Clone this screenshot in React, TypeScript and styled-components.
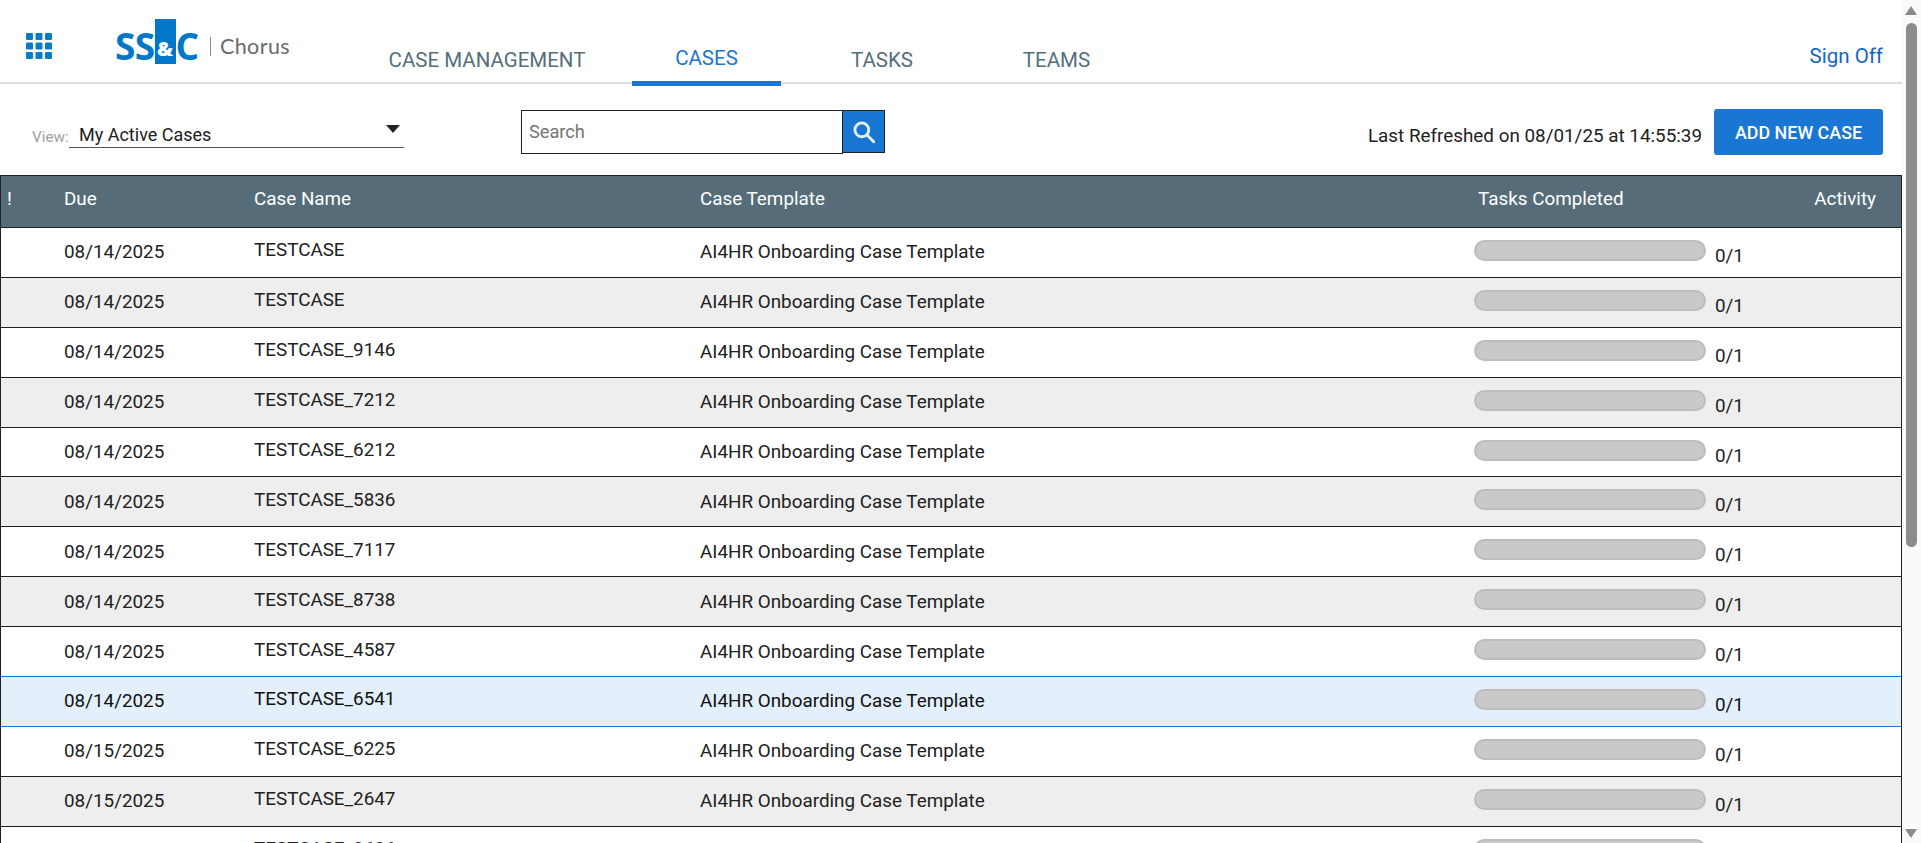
import React from "react";
import styled, { createGlobalStyle } from "styled-components";

const Global = createGlobalStyle`
  html, body { margin: 0; padding: 0; height: 100%; overflow: hidden; background: #fff; }
  #root { height: 100%; }
  * { box-sizing: border-box; }
  body { font-family: Roboto, "Liberation Sans", Arial, sans-serif; color: #212121; }
`;

const Page = styled.div`
  display: flex;
  height: 843px;
  overflow: hidden;
`;

const Main = styled.div`
  flex: 0 0 1902px;
  width: 1902px;
  display: flex;
  flex-direction: column;
  overflow: hidden;
`;

const Rail = styled.div`
  flex: 0 0 19px;
  background: #fafafa;
  display: flex;
  flex-direction: column;
  align-items: center;
  padding: 6px 2px 5px 2px;
`;

const ArrowUp = styled.div`
  width: 0;
  height: 0;
  border-left: 6.5px solid transparent;
  border-right: 6.5px solid transparent;
  border-bottom: 9px solid #8a8a8a;
  margin-left: -1px;
`;

const ArrowDown = styled.div`
  width: 0;
  height: 0;
  border-left: 6.5px solid transparent;
  border-right: 6.5px solid transparent;
  border-top: 9px solid #8a8a8a;
  margin-top: auto;
  margin-left: -1px;
`;

const Thumb = styled.div`
  width: 11px;
  height: 524px;
  margin-top: 8px;
  margin-left: -1px;
  background: #8c8c8c;
  border-radius: 6px;
`;

const Header = styled.header`
  height: 84px;
  flex: none;
  display: flex;
  border-bottom: 2px solid #dedede;
  position: relative;
`;

const Apps = styled.svg`
  width: 26px;
  height: 26px;
  margin: 33px 0 0 26px;
  flex: none;
`;

const Logo = styled.div`
  margin: 19px 0 0 63px;
  width: 227px;
  height: 45px;
  flex: none;
  display: flex;
  align-items: center;
`;

const LogoLetters = styled.span`
  font-family: "Open Sans", "Liberation Sans", sans-serif;
  font-weight: 700;
  font-size: 37px;
  line-height: 36px;
  letter-spacing: -0.6px;
  color: #0077c8;
  margin-top: 9px;
  flex: none;
`;

const LogoC = styled(LogoLetters)`
  letter-spacing: 0;
`;

const LogoBox = styled.span`
  width: 21px;
  height: 45px;
  background: #0077c8;
  color: #fff;
  display: flex;
  align-items: center;
  justify-content: center;
  font-family: "Open Sans", "Liberation Sans", sans-serif;
  font-weight: 800;
  font-size: 20px;
  padding-top: 14px;
  flex: none;
`;

const LogoDivider = styled.span`
  width: 1px;
  height: 19px;
  background: #8a8a8a;
  margin: 9px 9px 0 auto;
  flex: none;
`;

const LogoWord = styled.span`
  font-family: Lato, "Open Sans", sans-serif;
  font-weight: 400;
  font-size: 21.5px;
  letter-spacing: 0.4px;
  color: #6a6a6a;
  margin: 9px 0 0 0;
  flex: none;
`;

const LogoInner = styled.div`
  width: 175px;
  display: flex;
  align-items: center;
  height: 45px;
`;

const Tabs = styled.nav`
  display: flex;
  height: 86px;
`;

const Tab = styled.a<{ $active?: boolean; $w: number }>`
  width: ${(p) => p.$w}px;
  flex: none;
  height: 86px;
  display: flex;
  justify-content: center;
  font-size: 20.5px;
  padding-top: ${(p) => (p.$active ? 46 : 48)}px;
  line-height: 24px;
  color: ${(p) => (p.$active ? "#1976d2" : "#546e7a")};
  border-bottom: 5px solid ${(p) => (p.$active ? "#1976d2" : "transparent")};
`;

const SignOff = styled.a`
  margin: 44px 19px 0 auto;
  font-size: 20.5px;
  line-height: 24px;
  color: #1565c0;
`;

const Toolbar = styled.div`
  height: 91px;
  flex: none;
  display: flex;
  align-items: flex-start;
`;

const ViewLabel = styled.label`
  margin: 44px 0 0 32px;
  font-size: 15.3px;
  line-height: 18px;
  color: #9e9e9e;
  width: 37px;
  flex: none;
`;

const ViewSelect = styled.div`
  width: 335px;
  height: 33px;
  margin-top: 31px;
  padding: 7px 0 0 10px;
  border-bottom: 1px solid #555;
  font-size: 18px;
  line-height: 26px;
  color: #212121;
  position: relative;
  flex: none;
`;

const Caret = styled.span`
  position: absolute;
  right: 4px;
  top: 10px;
  width: 0;
  height: 0;
  border-left: 7px solid transparent;
  border-right: 7px solid transparent;
  border-top: 8px solid #212121;
`;

const Search = styled.div`
  display: flex;
  align-items: flex-start;
  margin: 26px 0 0 117px;
  flex: none;
`;

const SearchInput = styled.div`
  width: 322px;
  height: 44px;
  border: 1px solid #212121;
  padding-left: 7px;
  font-size: 18.2px;
  line-height: 42px;
  color: #757575;
`;

const SearchButton = styled.button`
  width: 42px;
  height: 43px;
  padding: 0;
  background: #1976d2;
  border: 1px solid #212121;
  border-left: none;
  display: flex;
  align-items: center;
  justify-content: center;
`;

const Refreshed = styled.div`
  margin: 40px 12px 0 auto;
  font-size: 18.85px;
  line-height: 24px;
  color: #212121;
`;

const AddButton = styled.button`
  width: 169px;
  height: 46px;
  margin: 25px 19px 0 0;
  background: #1976d2;
  color: #fff;
  border: none;
  border-radius: 3px;
  font-family: inherit;
  font-size: 17.9px;
  font-weight: 500;
  flex: none;
`;

const Grid = styled.div`
  border-left: 1px solid #212121;
  border-right: 1px solid #212121;
  flex: none;
`;

const columns = "63px 190px 446px 774px 1fr";

const HeadRow = styled.div`
  display: grid;
  grid-template-columns: ${columns};
  height: 53px;
  padding-bottom: 5px;
  align-items: center;
  background: #566d79;
  color: #fff;
  border-top: 1px solid #212121;
  border-bottom: 1px solid #212121;
  font-size: 18.85px;
  font-weight: 400;
`;

const Bang = styled.span`
  padding-left: 6px;
`;

const HeadTail = styled.div`
  display: flex;
  justify-content: space-between;
  padding: 0 25px 0 4px;
`;

const Row = styled.div<{ $even: boolean; $selected: boolean }>`
  display: grid;
  grid-template-columns: ${columns};
  height: 49.9px;
  align-items: center;
  font-size: 18.85px;
  color: ${(p) => (p.$selected ? "#111" : "#212121")};
  background: ${(p) => (p.$selected ? "#e3f0fb" : p.$even ? "#eeeeee" : "#ffffff")};
  border-bottom: 1px solid ${(p) => (p.$selected ? "#1976d2" : "#212121")};
  box-shadow: ${(p) => (p.$selected ? "0 -1px 0 #1976d2" : "none")};
`;

const DueCell = styled.span`
  grid-column: 2;
`;

const NameCell = styled.span`
  padding-bottom: 4px;
`;

const TemplateCell = styled.span``;

const TasksCell = styled.div`
  display: flex;
  align-items: flex-start;
  align-self: start;
  padding-top: 12px;
`;

const Track = styled.div`
  width: 232px;
  height: 21px;
  background: #c9c9c9;
  border: 2px solid #bdbdbd;
  border-radius: 11px;
  flex: none;
`;

const Count = styled.span`
  margin: 4px 0 0 9px;
  line-height: 24px;
`;

const rows: [string, string][] = [
  ["08/14/2025", "TESTCASE"],
  ["08/14/2025", "TESTCASE"],
  ["08/14/2025", "TESTCASE_9146"],
  ["08/14/2025", "TESTCASE_7212"],
  ["08/14/2025", "TESTCASE_6212"],
  ["08/14/2025", "TESTCASE_5836"],
  ["08/14/2025", "TESTCASE_7117"],
  ["08/14/2025", "TESTCASE_8738"],
  ["08/14/2025", "TESTCASE_4587"],
  ["08/14/2025", "TESTCASE_6541"],
  ["08/15/2025", "TESTCASE_6225"],
  ["08/15/2025", "TESTCASE_2647"],
  ["08/15/2025", "TESTCASE_8686"],
];

const dots = [0, 9.5, 19];

export default function App() {
  return (
    <Page>
      <Global />
      <Main>
        <Header>
          <Apps viewBox="0 0 26 26">
            {dots.flatMap((y) =>
              dots.map((x) => <rect key={`${x}-${y}`} x={x} y={y} width="7" height="7" rx="1.2" fill="#0a7cc4" />)
            )}
          </Apps>
          <Logo>
            <LogoInner>
              <LogoLetters>SS</LogoLetters>
              <LogoBox>&amp;</LogoBox>
              <LogoC>C</LogoC>
              <LogoDivider />
              <LogoWord>Chorus</LogoWord>
            </LogoInner>
          </Logo>
          <Tabs>
            <Tab $w={290}>CASE MANAGEMENT</Tab>
            <Tab $w={149} $active>CASES</Tab>
            <Tab $w={202}>TASKS</Tab>
            <Tab $w={147}>TEAMS</Tab>
          </Tabs>
          <SignOff>Sign Off</SignOff>
        </Header>
        <Toolbar>
          <ViewLabel>View:</ViewLabel>
          <ViewSelect>
            My Active Cases
            <Caret />
          </ViewSelect>
          <Search>
            <SearchInput>Search</SearchInput>
            <SearchButton aria-label="Search">
              <svg width="26" height="26" viewBox="0 0 24 24" fill="none" stroke="#e3f0fb" strokeWidth="2.6" strokeLinecap="round">
                <circle cx="10" cy="10" r="6.4" />
                <path d="M15 15l6 6" />
              </svg>
            </SearchButton>
          </Search>
          <Refreshed>Last Refreshed on 08/01/25 at 14:55:39</Refreshed>
          <AddButton>ADD NEW CASE</AddButton>
        </Toolbar>
        <Grid>
          <HeadRow>
            <Bang>!</Bang>
            <span>Due</span>
            <span>Case Name</span>
            <span>Case Template</span>
            <HeadTail>
              <span>Tasks Completed</span>
              <span>Activity</span>
            </HeadTail>
          </HeadRow>
          {rows.map(([due, name], i) => (
            <Row key={i} $even={i % 2 === 1} $selected={i === 9}>
              <DueCell>{due}</DueCell>
              <NameCell>{name}</NameCell>
              <TemplateCell>AI4HR Onboarding Case Template</TemplateCell>
              <TasksCell>
                <Track />
                <Count>0/1</Count>
              </TasksCell>
            </Row>
          ))}
        </Grid>
      </Main>
      <Rail>
        <ArrowUp />
        <Thumb />
        <ArrowDown />
      </Rail>
    </Page>
  );
}
